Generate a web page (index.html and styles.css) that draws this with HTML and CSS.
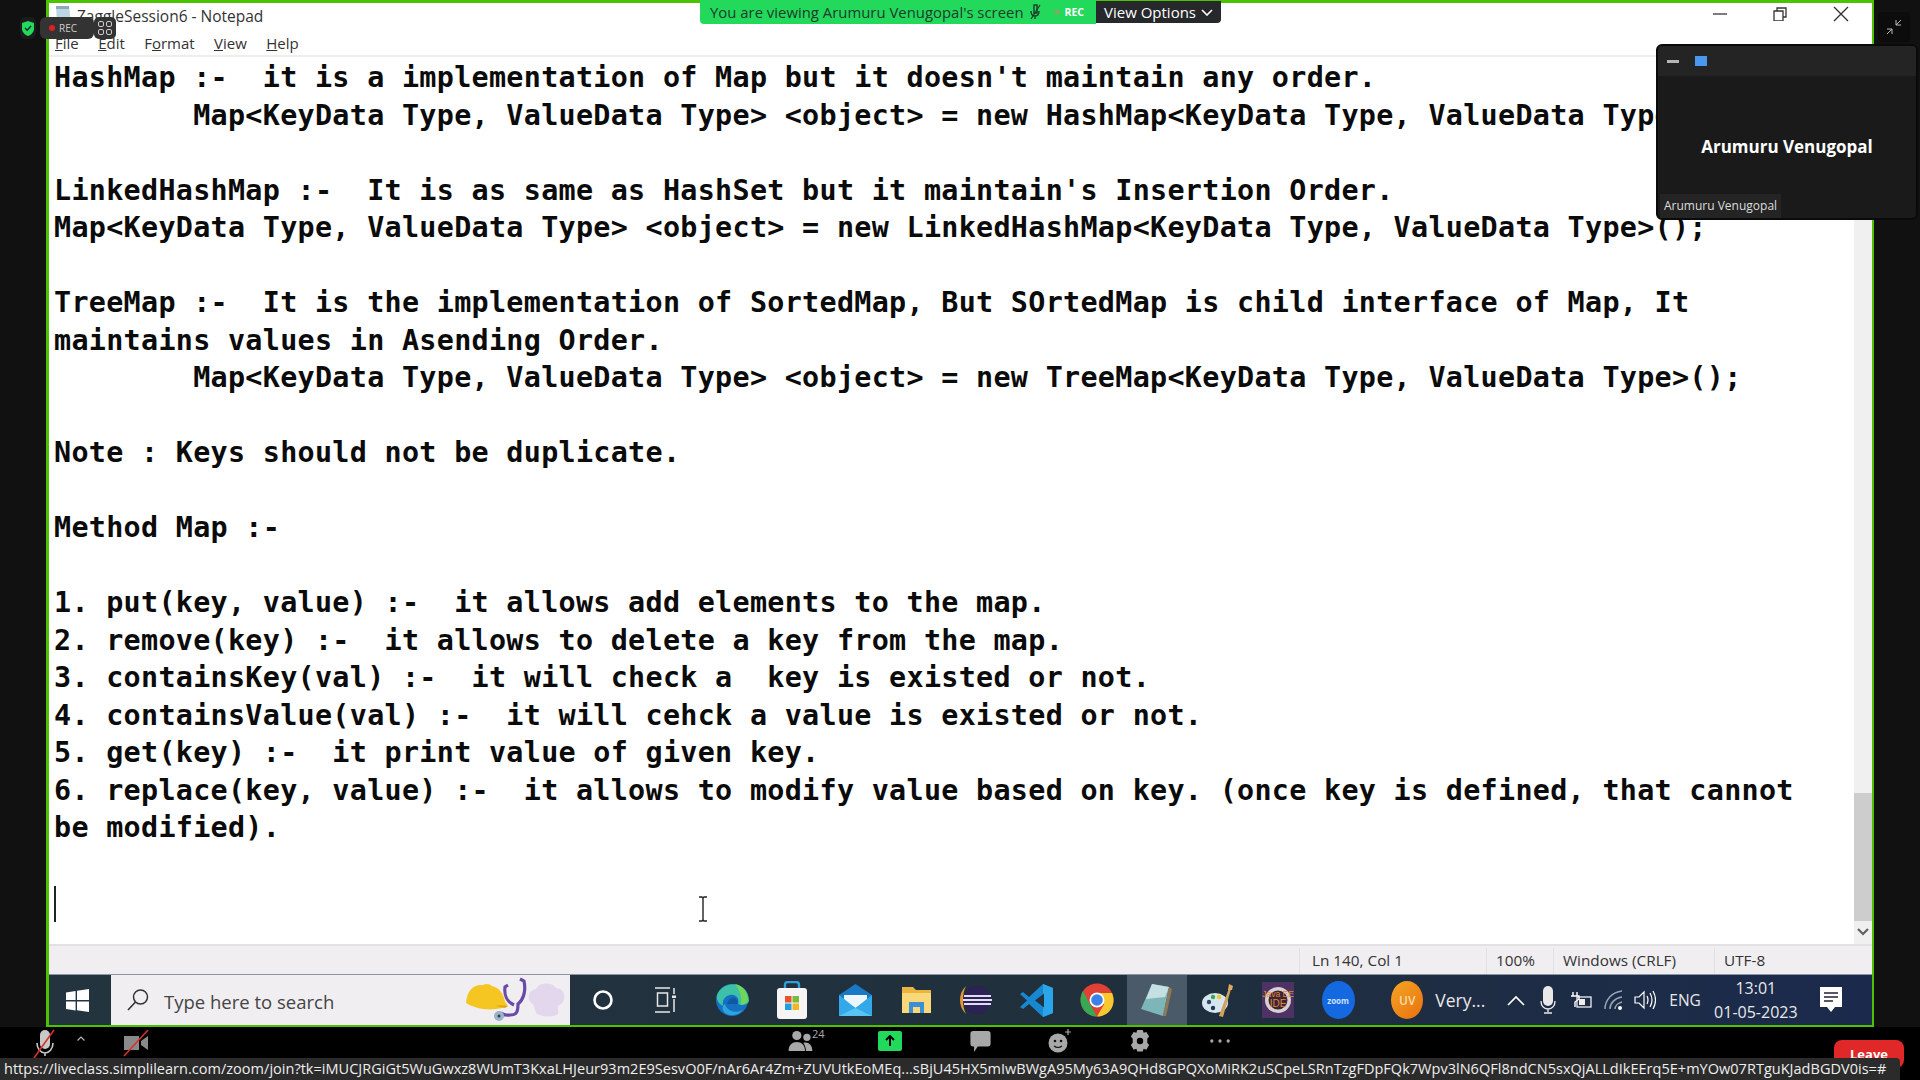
FILE: index.html
```html
<!DOCTYPE html>
<html lang="en">
<head>
  <meta charset="UTF-8" />
  <title>ZaggleSession6 - Notepad</title>
  <link rel="stylesheet" href="styles.css">
</head>
<body>
  <div id="screen">
    <div id="sideLeft"></div>

    <div id="frame">
      <div id="titleBar">
        <svg class="noteIcon" width="20" height="18" viewBox="0 0 20 18"><path d="M3 1h13l2 17H4z" fill="#bcd6e6"/><path d="M3 1h13v3H3z" fill="#8fa9b8"/></svg>
        <span id="windowTitle">ZaggleSession6 - Notepad</span>
        <div id="windowBtns">
          <svg width="14" height="14" viewBox="0 0 14 14"><path d="M0 7h14" stroke="#444" stroke-width="1.4"/></svg>
          <svg width="14" height="14" viewBox="0 0 14 14"><path d="M1 4h9v10H1zM4 4V1h9v9h-3" fill="none" stroke="#333" stroke-width="1.3"/></svg>
          <svg width="16" height="16" viewBox="0 0 16 16"><path d="M1 1l14 14M15 1L1 15" stroke="#333" stroke-width="1.4"/></svg>
        </div>
      </div>
      <div id="menuBar">
        <span><u>F</u>ile</span>
        <span><u>E</u>dit</span>
        <span>F<u>o</u>rmat</span>
        <span><u>V</u>iew</span>
        <span><u>H</u>elp</span>
      </div>

      <div id="editor">
        <pre id="noteText">HashMap :-  it is a implementation of Map but it doesn't maintain any order.
        Map&lt;KeyData Type, ValueData Type&gt; &lt;object&gt; = new HashMap&lt;KeyData Type, ValueData Type&gt;();

LinkedHashMap :-  It is as same as HashSet but it maintain's Insertion Order.
Map&lt;KeyData Type, ValueData Type&gt; &lt;object&gt; = new LinkedHashMap&lt;KeyData Type, ValueData Type&gt;();

TreeMap :-  It is the implementation of SortedMap, But SOrtedMap is child interface of Map, It
maintains values in Asending Order.
        Map&lt;KeyData Type, ValueData Type&gt; &lt;object&gt; = new TreeMap&lt;KeyData Type, ValueData Type&gt;();

Note : Keys should not be duplicate.

Method Map :-

1. put(key, value) :-  it allows add elements to the map.
2. remove(key) :-  it allows to delete a key from the map.
3. containsKey(val) :-  it will check a  key is existed or not.
4. containsValue(val) :-  it will cehck a value is existed or not.
5. get(key) :-  it print value of given key.
6. replace(key, value) :-  it allows to modify value based on key. (once key is defined, that cannot
be modified).

<span id="caret"></span></pre>
        <div id="scrollBar">
          <div id="scrollThumb"></div>
          <svg id="scrollArrow" width="12" height="8" viewBox="0 0 12 8"><path d="M1 1l5 5 5-5" fill="none" stroke="#606060" stroke-width="2.2"/></svg>
        </div>
        <svg id="ibeam" width="10" height="26" viewBox="0 0 10 26"><path d="M1 1h3l1 1 1-1h3M5 2v22M1 25h3l1-1 1 1h3" fill="none" stroke="#222" stroke-width="1.4"/></svg>
      </div>

      <div id="statusBar">
        <div class="statusCell cellPos">Ln 140, Col 1</div>
        <div class="statusCell cellZoom">100%</div>
        <div class="statusCell cellEol">Windows (CRLF)</div>
        <div class="statusCell cellEnc">UTF-8</div>
      </div>

      <div id="taskbar">
        <div id="startBtn">
          <svg width="23" height="23" viewBox="0 0 23 23"><path d="M0 3.4l9.6-1.4v9H0zM11 1.8L23 0v11H11zM0 12.4h9.6v9L0 20zM11 12.4h12V23l-12-1.8z" fill="#fff"/></svg>
        </div>
        <div id="searchBox">
          <svg width="24" height="24" viewBox="0 0 24 24"><circle cx="14.5" cy="9" r="7" fill="none" stroke="#333" stroke-width="1.5"/><path d="M9.5 14L2 22" stroke="#333" stroke-width="1.7"/></svg>
          <span id="searchText">Type here to search</span>
          <svg id="searchArt" width="104" height="50" viewBox="0 0 104 50">
            <path d="M1 28C2 14 10 9 18 10c3-2 7-1 9 1 8 2 12 9 13 16l3 4-6 2C25 36 10 34 1 28z" fill="#f5c622"/>
            <path d="M30 31c4-1 8-1 13 0l-3 2z" fill="#e0a818"/>
            <path d="M43 10l-3 2c-1 8 2 15 9 18M55 4l4 2c2 9 0 18-6 23 0 9-2 11-8 11-5 1-7-1-9-2" fill="none" stroke="#6a49a8" stroke-width="3.2"/>
            <circle cx="34" cy="41" r="5" fill="#9db3c8"/><circle cx="34" cy="41" r="1.5" fill="#2c3e50"/>
            <path d="M68 29c-7-4-5-14 3-15 4-7 16-7 20-1 8 0 11 9 6 15l-4 3v8c-7 4-17 3-22-1z" fill="#e3d7ee"/>
          </svg>
        </div>
        <div class="taskIcon cortanaCell">
          <svg width="22" height="22" viewBox="0 0 22 22"><circle cx="11" cy="11" r="8.5" fill="none" stroke="#fff" stroke-width="2.6"/></svg>
        </div>
        <div class="taskIcon viewCell">
          <svg width="24" height="26" viewBox="0 0 24 26"><path d="M1 1h15M1 25h15M3.5 6h10v13h-10zM20 1v6M20 12v13" fill="none" stroke="#e8e8e8" stroke-width="1.5"/><path d="M18 8.5h4V11h-4z" fill="#e8e8e8"/></svg>
        </div>
        <div class="taskIcon edgeCell">
          <svg width="34" height="34" viewBox="0 0 34 34"><circle cx="17" cy="17" r="16" fill="#1570c2"/><path d="M2 12C6 2 18-2 27 4c5 3 7 9 7 14-1 3-4 4-8 4l-3-1c2-6-3-10-8-9-5 1-8 5-7 11-4-2-7-6-6-11z" fill="#3cc0a8"/><path d="M20 1c6 1 11 6 13 14 1 4-3 6-7 7 1-7-1-15-6-21z" fill="#6fd65a"/><path d="M12 21c1-5 5-7 8-6 2 1 3 3 3 6z" fill="#0e5aa0"/><path d="M10 21c2 7 10 10 18 6-5 6-14 7-19 2-2-3-2-6 1-8z" fill="#2ca4de"/></svg>
        </div>
        <div class="taskIcon">
          <svg width="30" height="38" viewBox="0 0 30 38"><path d="M8 8V4q0-3 3-3h8q3 0 3 3v4" fill="none" stroke="#2f9fd8" stroke-width="2.4"/><rect y="7" width="30" height="31" rx="3" fill="#f6f4f4"/><rect x="8" y="15" width="6.5" height="6.5" fill="#e8532b"/><rect x="15.5" y="15" width="6.5" height="6.5" fill="#7db93c"/><rect x="8" y="22.5" width="6.5" height="6.5" fill="#1f9fe0"/><rect x="15.5" y="22.5" width="6.5" height="6.5" fill="#f4b622"/></svg>
        </div>
        <div class="taskIcon mailCell">
          <svg width="33" height="32" viewBox="0 0 33 32"><path d="M0 11L16.5 0 33 11v21H0z" fill="#1a78c4"/><path d="M5 11h23v6l-11.500 7L5 17z" fill="#eaf6fc"/><path d="M0 11l16.500 13L33 11v21H0z" fill="#34a9ea"/><path d="M0 32l16.500-8L33 32z" fill="#56c5f2"/></svg>
        </div>
        <div class="taskIcon">
          <svg width="29" height="26" viewBox="0 0 29 26"><path d="M0 0h11l3 3h15v23H0z" fill="#e9b440"/><path d="M0 6h29v20H0z" fill="#f8d878"/><path d="M7 26V15h15v11h-4v-6h-7v6z" fill="#3b8fd6"/></svg>
        </div>
        <div class="taskIcon">
          <svg width="32" height="30" viewBox="0 0 32 30"><circle cx="17" cy="15" r="14" fill="#2c2255"/><path d="M6 1C-2 8-2 22 6 29 2 22 2 8 6 1z" fill="#e8963a"/><path d="M4 11h27M3 15h29M4 19h27" stroke="#e2dcf2" stroke-width="2.2"/></svg>
        </div>
        <div class="taskIcon">
          <svg width="33" height="33" viewBox="0 0 33 33"><path d="M23 0l10 4v25l-10 4L9 20l-6 5-3-2 7-6.500L0 10l3-2 6 5z" fill="#1788d0"/><path d="M23 0l10 4v25l-10 4z" fill="#2aa5ea"/><path d="M24 9.500l-9 7 9 7z" fill="#22323e"/></svg>
        </div>
        <div class="taskIcon">
          <svg width="34" height="34" viewBox="0 0 34 34"><circle cx="17" cy="17" r="16.5" fill="#e14034"/><path d="M3 8l8 15 6 10.500C8 33.500.5 26 .5 17 .5 13.500 1.500 10.500 3 8z" fill="#38a852"/><path d="M17 10h15c4 9 0 19-8 22-2 1-5 1.500-7 1.500l7-12z" fill="#f9c72e"/><circle cx="17" cy="17" r="7.5" fill="#fff"/><circle cx="17" cy="17" r="5.8" fill="#3b82e6"/></svg>
        </div>
        <div class="taskIcon activeIcon">
          <svg width="32" height="32" viewBox="0 0 32 32"><path d="M11 0l17 3-6 29L0 25z" fill="#7db6b8"/><path d="M11 0l17 3-4 10L5 15z" fill="#c5dfe2"/><path d="M22 32l6-29 3 2-6 27z" fill="#8c7a58"/></svg>
        </div>
        <div class="taskIcon">
          <svg width="32" height="34" viewBox="0 0 32 34"><ellipse cx="13" cy="20" rx="13" ry="10" fill="#d6e6ee"/><circle cx="7" cy="19" r="2.2" fill="#2b4a70"/><circle cx="11" cy="14" r="2.2" fill="#39a84f"/><circle cx="17" cy="14" r="2.2" fill="#f4c52c"/><circle cx="11" cy="25" r="2.2" fill="#1f3a58"/><path d="M17 33L27 5l2 1-8 28z" fill="#d0a25e"/><path d="M26 7l1-6 4 2-1 4z" fill="#e0a860"/></svg>
        </div>
        <div class="taskIcon">
          <svg width="32" height="36" viewBox="0 0 32 36"><rect width="32" height="36" fill="#4e3266"/><circle cx="16" cy="18" r="13" fill="#d9d0d0"/><circle cx="16" cy="18" r="9.5" fill="#3a2440"/><text x="16" y="15" text-anchor="middle" font-family="Liberation Sans" font-size="8.5" fill="#e08a2a">Java EE</text><text x="16" y="25" text-anchor="middle" font-family="Liberation Sans" font-size="10" fill="#e08a2a">IDE</text></svg>
        </div>
        <div class="taskIcon">
          <div id="zoomIcon">zoom</div>
        </div>
        <div id="trayArea">
          <div id="uvBadge">UV</div>
          <span id="veryText">Very...</span>
          <svg class="caretUp" width="18" height="11" viewBox="0 0 18 11"><path d="M1 10l8-8 8 8" fill="none" stroke="#fff" stroke-width="1.7"/></svg>
          <svg class="micTray" width="16" height="28" viewBox="0 0 16 28"><rect x="3" y="0" width="10" height="20" rx="5" fill="#e8e8e8"/><path d="M1 15c0 5 3 8 7 8s7-3 7-8M8 23v3M4 27h8" fill="none" stroke="#e8e8e8" stroke-width="1.4"/></svg>
          <svg class="batteryTray" width="22" height="18" viewBox="0 0 22 18"><path d="M3 1v4M7 1v4M1 5h8v3l-4 3v5" fill="none" stroke="#fff" stroke-width="1.4"/><rect x="7" y="6" width="14" height="10" fill="none" stroke="#eee" stroke-width="1.3"/><rect x="9" y="8" width="6" height="6" fill="#eee"/></svg>
          <svg class="wifiTray" width="20" height="20" viewBox="0 0 20 20"><path d="M1 19C1 10 8 2 18 1M6 19c0-6 5-11 12-12M11 19c0-3 3-6 7-7" fill="none" stroke="#9aa5b5" stroke-width="1.5"/><circle cx="16" cy="18" r="2" fill="#fff"/></svg>
          <svg class="volTray" width="22" height="20" viewBox="0 0 22 20"><path d="M1 7h4l5-5v16l-5-5H1z" fill="none" stroke="#fff" stroke-width="1.2"/><path d="M13 6q2 4 0 8M16 3q4 7 0 14M19 1q5 9 0 18" fill="none" stroke="#fff" stroke-width="1.2"/></svg>
          <span id="langText">ENG</span>
          <div id="clock"><span>13:01</span><span>01-05-2023</span></div>
          <svg class="notifTray" width="22" height="26" viewBox="0 0 22 26"><path d="M0 0h22v20h-7l-4 5-4-5H0z" fill="#fff"/><path d="M4 6h14M4 10h14M4 14h9" stroke="#223" stroke-width="1.5"/></svg>
        </div>
      </div>
    </div>

    <div id="sideRight"></div>

    <div id="meetingBar">
      <div class="barLeft">
        <svg width="30" height="30" viewBox="0 0 30 30"><rect x="10" y="2" width="10" height="19" rx="5" fill="#c8c8c8"/><path d="M7 15c0 6 4 10 8 10s8-4 8-10M15 25v3" fill="none" stroke="#c8c8c8" stroke-width="1.6"/><path d="M4 30L24 2" stroke="#d8302a" stroke-width="1.6"/></svg>
        <svg class="barCaret" width="8" height="5" viewBox="0 0 8 5"><path d="M.5 4.5L4 1l3.500 3.500" fill="none" stroke="#bbb" stroke-width="1.1"/></svg>
        <svg class="barCam" width="26" height="28" viewBox="0 0 26 28"><path d="M1 7h15v14H1zM18 12l7-5v14l-7-5z" fill="#8a8a8a"/><path d="M1 27L25 1" stroke="#d8302a" stroke-width="1.6"/></svg>
      </div>
      <div class="barCenter">
        <div class="barItem peopleItem">
          <svg width="25" height="22" viewBox="0 0 26 24"><circle cx="9" cy="6" r="5" fill="#a8a8a8"/><circle cx="20" cy="8" r="4" fill="#a8a8a8"/><path d="M0 23c0-7 4-10 9-10s9 3 9 10zM19 23c0-3-1-6-3-9 6-2 10 3 10 9z" fill="#a8a8a8"/></svg>
          <span id="peopleCount">24</span>
        </div>
        <div class="barItem wideGap">
          <div id="shareBtn">
            <svg width="10" height="12" viewBox="0 0 10 12"><path d="M5 11V2M1 5l4-4 4 4" fill="none" stroke="#000" stroke-width="2"/></svg>
          </div>
        </div>
        <div class="barItem wideGap">
          <svg width="21" height="22" viewBox="0 0 22 24"><path d="M3 1h16q3 0 3 3v11q0 3-3 3H8l-4 6v-6H3q-3 0-3-3V4q0-3 3-3z" fill="#a8a8a8"/></svg>
        </div>
        <div class="barItem">
          <svg width="24" height="26" viewBox="0 0 24 26"><circle cx="10" cy="15" r="9.5" fill="#a8a8a8"/><circle cx="7" cy="13" r="1.3" fill="#111"/><circle cx="13" cy="13" r="1.3" fill="#111"/><path d="M6 18q4 3 8 0" fill="none" stroke="#111" stroke-width="1.2"/><path d="M20 1v6M17 4h6" stroke="#a8a8a8" stroke-width="1.2"/></svg>
        </div>
        <div class="barItem">
          <svg width="20" height="22" viewBox="0 0 22 24"><path d="M8 0h6l1 3 3-1 3 5-2 2.500v4.500l2 2.500-3 5-3-1-1 3H8l-1-3-3 1-3-5 2-2.500V9.500L1 7l3-5 3 1z" fill="#a8a8a8"/><circle cx="11" cy="12" r="3.5" fill="#000"/></svg>
        </div>
        <div class="barItem">
          <svg width="20" height="4" viewBox="0 0 22 4"><circle cx="2" cy="2" r="1.8" fill="#a8a8a8"/><circle cx="11" cy="2" r="1.8" fill="#a8a8a8"/><circle cx="20" cy="2" r="1.8" fill="#a8a8a8"/></svg>
        </div>
      </div>
      <div id="leaveBtn">Leave</div>
    </div>

    <div id="linkTip">https://liveclass.simplilearn.com/zoom/join?tk=iMUCJRGiGt5WuGwxz8WUmT3KxaLHJeur93m2E9SesvO0F/nAr6Ar4Zm+ZUVUtkEoMEq...sBjU45HX5mIwBWgA95My63A9QHd8GPQXoMiRK2uSCpeLSRnTzgFDpFQk7Wpv3lN6QFl8ndCN5sxQjALLdIkEErq5E+mYOw07RTguKJadBGDV0is=#</div>

    <div id="recGroup">
      <div id="shieldBox">
        <svg width="12" height="15" viewBox="0 0 12 15"><path d="M6 0l6 2v6c0 3-3 6-6 7-3-1-6-4-6-7V2z" fill="#22d95c"/><path d="M3 7l2.200 2.200L9 5" fill="none" stroke="#123" stroke-width="1.3"/></svg>
      </div>
      <div id="recBadge"><i></i>REC</div>
      <div id="gridBox">
        <svg width="14" height="14" viewBox="0 0 14 14"><g fill="none" stroke="#ccc" stroke-width="1"><rect x=".5" y=".5" width="5" height="5" rx="1.5"/><rect x="8.5" y=".5" width="5" height="5" rx="1.5"/><rect x=".5" y="8.5" width="5" height="5" rx="1.5"/><rect x="8.5" y="8.5" width="5" height="5" rx="1.5"/></g></svg>
      </div>
    </div>

    <div id="viewBanner">
      <div id="viewingText">
        <span>You are viewing Arumuru Venugopal's screen</span>
        <svg width="12" height="16" viewBox="0 0 12 16"><path d="M5 1h3v8H5zM2 7c0 4 2 5 4 5s4-1 4-5M6 12v3" fill="none" stroke="#1f3a2c" stroke-width="1.4"/><path d="M2 15L11 1" stroke="#1f3a2c" stroke-width="1.2"/></svg>
        <i id="recDot"></i>
        <b>REC</b>
      </div>
      <div id="viewOptions">
        <span>View Options</span>
        <svg width="12" height="7" viewBox="0 0 12 7"><path d="M1 1l5 5 5-5" fill="none" stroke="#fff" stroke-width="1.6"/></svg>
      </div>
    </div>

    <div id="exitFull">
      <svg width="16" height="16" viewBox="0 0 16 16"><path d="M10 1v5h5M10 6l5-5M6 15v-5H1M6 10l-5 5" fill="none" stroke="#bbb" stroke-width="1"/></svg>
    </div>

    <div id="videoPanel">
      <div id="videoHead"><i id="minDash"></i><i id="blueSquare"></i></div>
      <div id="videoBody">Arumuru Venugopal</div>
      <div id="videoFoot"><span id="videoLabel">Arumuru Venugopal</span></div>
    </div>
  </div>
</body>
</html>
```

FILE: styles.css
```css
html, body {
  margin: 0;
  padding: 0;
  width: 1920px;
  height: 1080px;
  overflow: hidden;
  background: #000;
  font-family: 'Open Sans', 'Noto Sans', sans-serif;
}

#screen {
  position: relative;
  width: 1920px;
  height: 1080px;
  display: grid;
  grid-template-columns: 46px 1828px 46px;
  grid-template-rows: 1027px 53px;
}

#sideLeft, #sideRight {
  background: #111;
}

#frame {
  border: solid #4bc300;
  border-width: 3px 2px 2px 3px;
  display: flex;
  flex-direction: column;
  background: #fff;
  min-height: 0;
}

/* Notepad window */
#titleBar {
  height: 28px;
  display: flex;
  align-items: center;
  padding-left: 4px;
  color: #333;
  font-size: 15.5px;
}

.noteIcon {
  margin-right: 4px;
  margin-top: -6px;
}

#windowTitle {
  margin-top: -2px;
}

#windowBtns {
  margin-left: auto;
  margin-right: 23px;
  width: 136px;
  display: flex;
  justify-content: space-between;
  align-items: center;
  margin-top: -6px;
}

#menuBar {
  height: 24px;
  display: flex;
  align-items: center;
  padding-left: 6px;
  font-size: 15px;
  color: #333;
  border-bottom: 2px solid #eee;
  box-sizing: content-box;
}

#menuBar span {
  margin-right: 19.4px;
}

#editor {
  position: relative;
  flex: 1;
  display: flex;
  min-height: 0;
}

#noteText {
  flex: 1;
  margin: 0;
  padding: 2px 0 0 5px;
  overflow: hidden;
  font-family: 'DejaVu Sans Mono', monospace;
  font-weight: bold;
  font-size: 28.4px;
  letter-spacing: 0.305px;
  line-height: 37.5px;
  color: #0b0b0b;
}

#caret {
  display: inline-block;
  width: 2px;
  height: 36px;
  background: #222;
  vertical-align: middle;
}

#scrollBar {
  width: 18px;
  background: #f0f0f0;
  position: relative;
  flex-shrink: 0;
}

#scrollThumb {
  position: absolute;
  left: 0;
  right: 0;
  top: 736px;
  height: 128px;
  background: #cdcdcd;
}

#scrollArrow {
  position: absolute;
  left: 3px;
  bottom: 8px;
}

#ibeam {
  position: absolute;
  left: 649px;
  top: 839px;
}

#statusBar {
  height: 30px;
  display: flex;
  background: #f0eef0;
  border-top: 2px solid #e2e2e2;
  justify-content: flex-end;
  font-size: 15.3px;
  color: #333;
  box-sizing: border-box;
}

.statusCell {
  display: flex;
  align-items: center;
  padding-left: 9px;
  padding-bottom: 2px;
  border-left: 1px solid #e0e0e0;
  margin: 2px 0 0;
  box-sizing: border-box;
}

.cellPos { width: 187px; padding-left: 12px; }
.cellZoom { width: 67px; }
.cellEol { width: 161px; }
.cellEnc { width: 158px; }

/* Windows taskbar */
#taskbar {
  height: 51px;
  display: flex;
  background: linear-gradient(90deg, #23343f 0%, #202f3c 60%, #1b2a4c 100%);
  border-top: 1px solid #8a97a3;
  box-sizing: border-box;
}

#startBtn {
  width: 62px;
  padding-right: 6px;
  box-sizing: border-box;
  display: flex;
  align-items: center;
  justify-content: center;
}

#searchBox {
  width: 459px;
  display: flex;
  align-items: center;
  background: #f0eef0;
  padding-left: 15px;
  box-sizing: border-box;
  position: relative;
}

#searchText {
  margin-left: 14px;
  margin-top: 2px;
  font-size: 18.5px;
  color: #444;
}

#searchArt {
  position: absolute;
  right: 1px;
  top: 0;
}

.taskIcon {
  width: 60.3px;
  display: flex;
  align-items: center;
  justify-content: center;
}

.cortanaCell { width: 65px; }
.viewCell { width: 62px; }
.edgeCell { margin-left: 5px; }
.mailCell { margin-left: 3px; }

.activeIcon {
  background: #4a5a68;
}

#zoomIcon {
  width: 33px;
  height: 38px;
  border-radius: 50%;
  background: #1468e0;
  color: #cfe0ff;
  font-size: 8px;
  font-weight: 700;
  display: flex;
  align-items: center;
  justify-content: center;
}

#trayArea {
  flex: 1;
  display: flex;
  align-items: center;
  padding-left: 23px;
  color: #fff;
}

#uvBadge {
  width: 32px;
  height: 38px;
  border-radius: 50%;
  background: linear-gradient(135deg, #f5a623, #e8700f);
  color: #f7dcae;
  font-size: 12px;
  font-weight: 600;
  display: flex;
  align-items: center;
  justify-content: center;
}

#veryText {
  margin-left: 12px;
  font-size: 17.5px;
  color: #e8e8e8;
  width: 70px;
}

.caretUp { margin-left: 2px; }
.micTray { margin-left: 15px; }
.batteryTray { margin-left: 14px; }
.wifiTray { margin-left: 12px; }
.volTray { margin-left: 10px; }

#langText {
  margin-left: 13px;
  font-size: 15.5px;
  color: #e8e8e8;
}

#clock {
  margin-left: 14px;
  width: 82px;
  display: flex;
  flex-direction: column;
  align-items: center;
  font-size: 16px;
  line-height: 24px;
  color: #e8e8e8;
  text-align: center;
  white-space: nowrap;
}

.notifTray {
  margin-left: 23px;
}

/* Zoom controls along the bottom */
#meetingBar {
  grid-column: 1 / -1;
  display: flex;
  align-items: flex-start;
  background: #000;
  position: relative;
}

.barLeft {
  width: 760px;
  padding: 1px 0 0 30px;
  display: flex;
  align-items: center;
  box-sizing: border-box;
}

.barCaret { margin-left: 17px; margin-top: -10px; }
.barCam { margin-left: 38px; }

.barCenter {
  display: flex;
  padding-top: 1px;
}

.barItem {
  width: 80px;
  height: 26px;
  display: flex;
  align-items: center;
  justify-content: center;
  position: relative;
}

.wideGap {
  margin-left: 10px;
}

#peopleCount {
  position: absolute;
  left: 52px;
  top: -2px;
  font-size: 11px;
  color: #aaa;
}

#shareBtn {
  width: 24px;
  height: 20px;
  border-radius: 2px;
  background: #22d95c;
  display: flex;
  align-items: center;
  justify-content: center;
}

#leaveBtn {
  position: absolute;
  left: 1834px;
  top: 13px;
  width: 70px;
  height: 28px;
  border-radius: 8px;
  background: #e02828;
  color: #fff;
  font-size: 13px;
  font-weight: 700;
  text-align: center;
  line-height: 28px;
}

#linkTip {
  position: absolute;
  left: 0;
  top: 1058px;
  width: 1900px;
  height: 22px;
  padding-left: 4px;
  box-sizing: border-box;
  background: #2b2b2b;
  border-radius: 0 4px 0 0;
  color: #eee;
  font-size: 14.5px;
  letter-spacing: 0.022px;
  line-height: 22px;
  white-space: nowrap;
  overflow: hidden;
}

/* Overlays from the meeting client */
#recGroup {
  position: absolute;
  left: 20px;
  top: 17px;
  display: flex;
  align-items: center;
}

#shieldBox {
  width: 16px;
  height: 22px;
  margin-right: 4px;
  border-radius: 6px;
  background: #1c1c1c;
  display: flex;
  align-items: center;
  justify-content: center;
}

#recBadge {
  width: 54px;
  height: 22px;
  border-radius: 6px;
  background: #333;
  color: #ccc;
  font-size: 10px;
  display: flex;
  align-items: center;
  padding-left: 9px;
  box-sizing: border-box;
}

#recBadge i {
  width: 6px;
  height: 6px;
  border-radius: 50%;
  background: #e02020;
  margin-right: 4px;
}

#gridBox {
  width: 22px;
  height: 22px;
  border-radius: 5px;
  background: #333;
  display: flex;
  align-items: center;
  justify-content: center;
}

#viewBanner {
  position: absolute;
  left: 700px;
  top: 0;
  display: flex;
}

#viewingText {
  width: 396px;
  height: 24px;
  background: #22d95c;
  border-radius: 0 0 0 4px;
  display: flex;
  align-items: center;
  padding-left: 10px;
  box-sizing: border-box;
  font-size: 14.9px;
  color: #1f3a2c;
  white-space: nowrap;
}

#viewingText svg {
  margin-left: 5px;
}

#recDot {
  width: 6px;
  height: 6px;
  border-radius: 50%;
  background: #6fb35f;
  margin-left: 13px;
  margin-right: 3px;
}

#viewingText b {
  color: #fff;
  font-size: 10.5px;
  margin-left: 2px;
}

#viewOptions {
  width: 125px;
  height: 22px;
  margin-top: 1px;
  background: #26282b;
  border-radius: 0 0 4px 0;
  color: #fff;
  font-size: 15px;
  display: flex;
  align-items: center;
  padding-left: 8px;
  box-sizing: border-box;
}

#viewOptions svg {
  margin-left: 5px;
}

#exitFull {
  position: absolute;
  left: 1878px;
  top: 12px;
  width: 32px;
  height: 30px;
  border-radius: 4px;
  background: #0c0c0c;
  display: flex;
  align-items: center;
  justify-content: center;
}

#videoPanel {
  position: absolute;
  left: 1656px;
  top: 44px;
  width: 262px;
  height: 176px;
  border: 2px solid #0a0a0a;
  border-radius: 6px;
  box-sizing: border-box;
  background: #1a1a1a;
  display: flex;
  flex-direction: column;
  overflow: hidden;
}

#videoHead {
  height: 30px;
  background: #242424;
  display: flex;
  align-items: center;
  padding-left: 9px;
  flex-shrink: 0;
}

#minDash {
  width: 12px;
  height: 3px;
  background: #b5b5b5;
  margin-right: 16px;
}

#blueSquare {
  width: 12px;
  height: 10px;
  background: #4a97f0;
}

#videoBody {
  flex: 1;
  display: flex;
  align-items: center;
  justify-content: center;
  padding-top: 22px;
  color: #fff;
  font-size: 17px;
  font-weight: 700;
}

#videoFoot {
  height: 24px;
  flex-shrink: 0;
  display: flex;
  padding-left: 2px;
}

#videoLabel {
  padding: 0 4px;
  background: #242424;
  color: #ddd;
  font-size: 12px;
  line-height: 24px;
}
```
